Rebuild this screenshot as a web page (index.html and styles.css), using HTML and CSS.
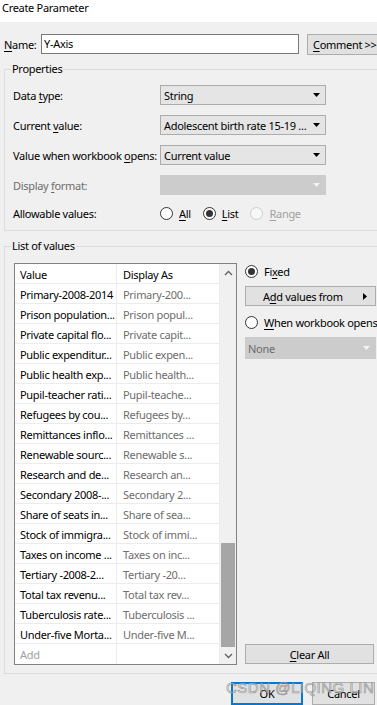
FILE: index.html
```html
<!DOCTYPE html>
<html lang="en">
  <head>
    <meta charset="UTF-8" />
    <meta name="viewport" content="width=device-width, initial-scale=1.0" />
    <title>Create Parameter</title>
    <link rel="stylesheet" href="styles.css">
  </head>
  <body>
    <div class="titlebar">Create Parameter</div>
    <div class="dialog">
      <div class="name-row">
        <label class="name-label"><u>N</u>ame:</label>
        <div class="textbox">Y-Axis</div>
        <button class="btn comment-btn"><u>C</u>omment &gt;&gt;</button>
      </div>

      <fieldset class="group props">
        <legend>Properties</legend>
        <div class="prop-row">
          <span class="prop-label">Data <u>t</u>ype:</span>
          <div class="combo"><span>String</span><svg width="7" height="4" viewBox="0 0 7 4"><polygon points="0,0 7,0 3.5,4" /></svg></div>
        </div>
        <div class="prop-row">
          <span class="prop-label">Current <u>v</u>alue:</span>
          <div class="combo"><span>Adolescent birth rate 15-19 ...</span><svg width="7" height="4" viewBox="0 0 7 4"><polygon points="0,0 7,0 3.5,4" /></svg></div>
        </div>
        <div class="prop-row">
          <span class="prop-label">Value when workbook <u>o</u>pens:</span>
          <div class="combo"><span>Current value</span><svg width="7" height="4" viewBox="0 0 7 4"><polygon points="0,0 7,0 3.5,4" /></svg></div>
        </div>
        <div class="prop-row disabled">
          <span class="prop-label">Display <u>f</u>ormat:</span>
          <div class="combo off"><span></span><svg width="7" height="4" viewBox="0 0 7 4"><polygon points="0,0 7,0 3.5,4" /></svg></div>
        </div>
        <div class="prop-row radio-row">
          <span class="prop-label">Allowable values:</span>
          <div class="radios">
            <span class="radio"><span class="dot"></span><span><u>A</u>ll</span></span>
            <span class="radio"><span class="dot checked"></span><span><u>L</u>ist</span></span>
            <span class="radio off"><span class="dot"></span><span><u>R</u>ange</span></span>
          </div>
        </div>
      </fieldset>

      <fieldset class="group values">
        <legend>List of values</legend>
        <div class="values-body">
          <div class="list">
            <div class="grid">
              <div class="row"><span class="cell v">Value</span><span class="cell d head">Display As</span></div>
              <div class="row"><span class="cell v">Primary-2008-2014</span><span class="cell d">Primary-200...</span></div>
              <div class="row"><span class="cell v">Prison population...</span><span class="cell d">Prison popul...</span></div>
              <div class="row"><span class="cell v">Private capital flo...</span><span class="cell d">Private capit...</span></div>
              <div class="row"><span class="cell v">Public expenditur...</span><span class="cell d">Public expen...</span></div>
              <div class="row"><span class="cell v">Public health exp...</span><span class="cell d">Public health...</span></div>
              <div class="row"><span class="cell v">Pupil-teacher rati...</span><span class="cell d">Pupil-teache...</span></div>
              <div class="row"><span class="cell v">Refugees by cou...</span><span class="cell d">Refugees by...</span></div>
              <div class="row"><span class="cell v">Remittances inflo...</span><span class="cell d">Remittances ...</span></div>
              <div class="row"><span class="cell v">Renewable sourc...</span><span class="cell d">Renewable s...</span></div>
              <div class="row"><span class="cell v">Research and de...</span><span class="cell d">Research an...</span></div>
              <div class="row"><span class="cell v">Secondary 2008-...</span><span class="cell d">Secondary 2...</span></div>
              <div class="row"><span class="cell v">Share of seats in...</span><span class="cell d">Share of sea...</span></div>
              <div class="row"><span class="cell v">Stock of immigra...</span><span class="cell d">Stock of immi...</span></div>
              <div class="row"><span class="cell v">Taxes on income ...</span><span class="cell d">Taxes on inc...</span></div>
              <div class="row"><span class="cell v">Tertiary -2008-2...</span><span class="cell d">Tertiary -20...</span></div>
              <div class="row"><span class="cell v">Total tax revenu...</span><span class="cell d">Total tax rev...</span></div>
              <div class="row"><span class="cell v">Tuberculosis rate...</span><span class="cell d">Tuberculosis ...</span></div>
              <div class="row"><span class="cell v">Under-five Morta...</span><span class="cell d">Under-five M...</span></div>
              <div class="row last"><span class="cell v add">Add</span><span class="cell d"></span></div>
            </div>
            <div class="scrollbar">
              <div class="arrow"><svg width="9" height="6" viewBox="0 0 9 6"><polyline points="1,5 4.5,1.5 8,5" /></svg></div>
              <div class="track"><div class="thumb"></div></div>
              <div class="arrow"><svg width="9" height="6" viewBox="0 0 9 6"><polyline points="1,1 4.5,4.5 8,1" /></svg></div>
            </div>
          </div>

          <div class="side">
            <span class="radio"><span class="dot checked"></span><span>Fi<u>x</u>ed</span></span>
            <button class="btn add-btn"><span>A<u>d</u>d values from</span><svg width="4" height="7" viewBox="0 0 4 7"><polygon points="0,0 4,3.5 0,7" /></svg></button>
            <span class="radio when"><span class="dot"></span><span><u>W</u>hen workbook opens</span></span>
            <div class="combo off none"><span>None</span><svg width="7" height="4" viewBox="0 0 7 4"><polygon points="0,0 7,0 3.5,4" /></svg></div>
            <button class="btn clear-btn"><u>C</u>lear All</button>
          </div>
        </div>
      </fieldset>

      <div class="buttons">
        <button class="btn ok-btn">OK</button>
        <button class="btn cancel-btn">Cancel</button>
      </div>
    </div>
    <div class="watermark">CSDN @LIQING LIN</div>
  </body>
</html>
```

FILE: styles.css
```css
html,
body {
  margin: 0;
}
body {
  width: 377px;
  height: 705px;
  overflow: hidden;
  position: relative;
  background-color: #f0f0f0;
  font-family: "Noto Sans", "Open Sans", sans-serif;
  font-size: 11px;
  letter-spacing: -0.3px;
  color: #000;
}
u {
  text-decoration-thickness: 1px;
  text-underline-offset: 2px;
}

.titlebar {
  height: 22px;
  background-color: #fff;
  padding-left: 2px;
  line-height: 15px;
  box-sizing: border-box;
}
.dialog {
  padding-left: 4px;
}

/* buttons */
.btn {
  font: inherit;
  letter-spacing: inherit;
  color: #000;
  background-color: #e1e1e1;
  border: 1px solid #adadad;
  box-sizing: border-box;
  height: 20px;
  padding: 0;
  flex-shrink: 0;
}

/* name */
.name-row {
  display: flex;
  align-items: center;
  height: 20px;
  margin-top: 12px;
}
.name-label {
  width: 37px;
  flex-shrink: 0;
}
.textbox {
  width: 258px;
  height: 20px;
  flex-shrink: 0;
  box-sizing: border-box;
  border: 1px solid #7a7a7a;
  background-color: #fff;
  padding-left: 2px;
  line-height: 18px;
}
.comment-btn {
  width: 80px;
  height: 21px;
  margin-left: 8px;
  padding-left: 5px;
  text-align: left;
  white-space: nowrap;
}

/* group boxes */
.group {
  box-sizing: border-box;
  width: 400px;
  margin: 0;
  border: 1px solid #dcdcdc;
}
.group legend {
  line-height: 16px;
  padding: 0 1px;
}
.props {
  margin-top: 7px;
  padding: 8px 0 9px 8px;
}
.props legend {
  margin-left: -2px;
}
.values {
  margin-top: 7px;
  padding: 9px 0 8px 9px;
}
.values legend {
  margin-left: -3px;
}

/* property rows */
.prop-row {
  display: flex;
  align-items: center;
  height: 20px;
}
.prop-row + .prop-row {
  margin-top: 10px;
}
.prop-row.radio-row {
  height: 16px;
}
.prop-label {
  width: 147px;
  flex-shrink: 0;
  white-space: nowrap;
}
.disabled .prop-label {
  color: #6d6d6d;
}
.combo {
  width: 166px;
  height: 20px;
  box-sizing: border-box;
  border: 1px solid #acacac;
  background-color: #e5e5e5;
  display: flex;
  align-items: center;
  justify-content: space-between;
  padding: 0 5px 0 3px;
  white-space: nowrap;
}
.combo svg {
  fill: #000;
  flex-shrink: 0;
}
.combo.off {
  background-color: #cccccc;
  border-color: #cccccc;
  color: #6d6d6d;
}
.combo.off svg {
  fill: #f4f4f4;
}

/* radios */
.radios {
  display: flex;
  gap: 12px;
}
.radio {
  display: flex;
  align-items: center;
  gap: 6px;
  height: 16px;
  white-space: nowrap;
}
.dot {
  width: 13px;
  height: 13px;
  box-sizing: border-box;
  border: 1px solid #333;
  border-radius: 50%;
  background-color: #fff;
  display: flex;
  align-items: center;
  justify-content: center;
  flex-shrink: 0;
}
.dot.checked::after {
  content: "";
  width: 7px;
  height: 7px;
  border-radius: 50%;
  background-color: #333;
}
.radio.off {
  color: #a0a0a0;
}
.radio.off .dot {
  border-color: #cccccc;
  background-color: #f7f7f7;
}

/* list of values */
.values-body {
  display: flex;
}
.list {
  display: flex;
  width: 223px;
  height: 402px;
  flex-shrink: 0;
  box-sizing: border-box;
  border: 1px solid #828282;
  background-color: #fff;
}
.grid {
  width: 205px;
}
.row {
  display: flex;
}
.cell {
  box-sizing: border-box;
  height: 20px;
  line-height: 21px;
  padding-left: 5px;
  border-right: 1px solid #ececec;
  border-bottom: 1px solid #ececec;
  white-space: nowrap;
  overflow: hidden;
}
.cell.v {
  width: 102px;
}
.cell.d {
  width: 103px;
  padding-left: 6px;
  color: #6d6d6d;
}
.cell.d.head {
  color: #000;
}
.cell.add {
  color: #a0a0a0;
}
.row.last .cell {
  border-bottom: none;
}

.scrollbar {
  width: 17px;
  background-color: #f0f0f0;
  display: flex;
  flex-direction: column;
}
.scrollbar .arrow {
  height: 17px;
  display: flex;
  align-items: center;
  justify-content: center;
}
.scrollbar polyline {
  fill: none;
  stroke: #606060;
  stroke-width: 1.3;
}
.track {
  flex: 1;
  display: flex;
  flex-direction: column;
  justify-content: flex-end;
}
.thumb {
  height: 104px;
  margin: 0 1px;
  background-color: #a6a6a6;
}

/* right side */
.side {
  width: 131px;
  margin-left: 8px;
  display: flex;
  flex-direction: column;
}
.add-btn {
  width: 131px;
  margin-top: 7px;
  display: flex;
  align-items: center;
  justify-content: space-between;
  padding: 0 8px 0 17px;
}
.add-btn svg {
  fill: #000;
}
.side .when {
  margin-top: 8px;
}
.combo.none {
  width: 131px;
  height: 22px;
  margin-top: 7px;
  padding-left: 2px;
}
.clear-btn {
  width: 129px;
  margin-top: auto;
  margin-bottom: 1px;
}

/* dialog buttons */
.buttons {
  display: flex;
  justify-content: flex-end;
  gap: 9px;
  margin-top: 8px;
  padding-right: 2px;
}
.ok-btn,
.cancel-btn {
  height: 23px;
}
.ok-btn {
  width: 72px;
  border: 2px solid #0078d7;
}
.cancel-btn {
  width: 63px;
}

.watermark {
  position: absolute;
  left: 226px;
  top: 679px;
  font-family: "Liberation Sans", sans-serif;
  font-size: 15px;
  letter-spacing: 0.5px;
  color: rgba(255, 255, 255, 0.55);
  -webkit-text-stroke: 0.7px rgba(110, 110, 110, 0.7);
  pointer-events: none;
}
```
